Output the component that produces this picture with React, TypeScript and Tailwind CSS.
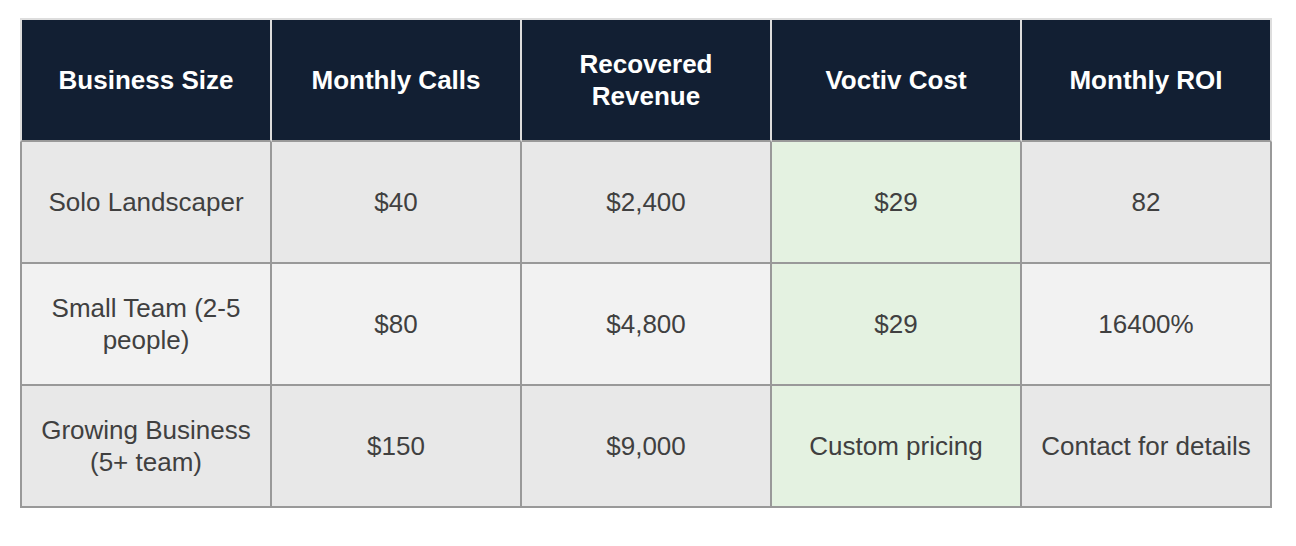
const headers = ["Business Size", "Monthly Calls", "Recovered Revenue", "Voctiv Cost", "Monthly ROI"];

const rows = [
  { bg: "bg-[#e8e8e8]", cells: ["Solo Landscaper", "$40", "$2,400", "$29", "82"] },
  { bg: "bg-[#f2f2f2]", cells: ["Small Team (2-5 people)", "$80", "$4,800", "$29", "16400%"] },
  { bg: "bg-[#e8e8e8]", cells: ["Growing Business (5+ team)", "$150", "$9,000", "Custom pricing", "Contact for details"] },
];

export default function App() {
  return (
    <div className="min-h-screen bg-white pt-[18px] pl-[20px] font-['Liberation_Sans',Arial,sans-serif]">
      <div className="grid w-[1252px] grid-cols-[252px_250px_250px_250px_250px]">
        {headers.map((h, i) => (
          <div
            key={h}
            className={`flex h-[124px] items-center justify-center border-t-2 border-r-2 border-b-2 border-t-[#dddddd] border-r-[#dddddd] border-b-[#999999] bg-[#121f33] px-4 text-center text-[26px] font-bold leading-[32px] text-white ${
              i === 0 ? "border-l-2 border-l-[#dddddd]" : ""
            }`}
          >
            {h}
          </div>
        ))}
        {rows.map((row) =>
          row.cells.map((c, i) => (
            <div
              key={row.cells[0] + i}
              className={`flex h-[122px] items-center justify-center border-r-2 border-b-2 border-[#999999] px-4 text-center text-[26px] leading-[32px] text-[#404040] ${
                i === 3 ? "bg-[#e4f2e1]" : row.bg
              } ${i === 0 ? "border-l-2" : ""}`}
            >
              {c}
            </div>
          ))
        )}
      </div>
    </div>
  );
}
